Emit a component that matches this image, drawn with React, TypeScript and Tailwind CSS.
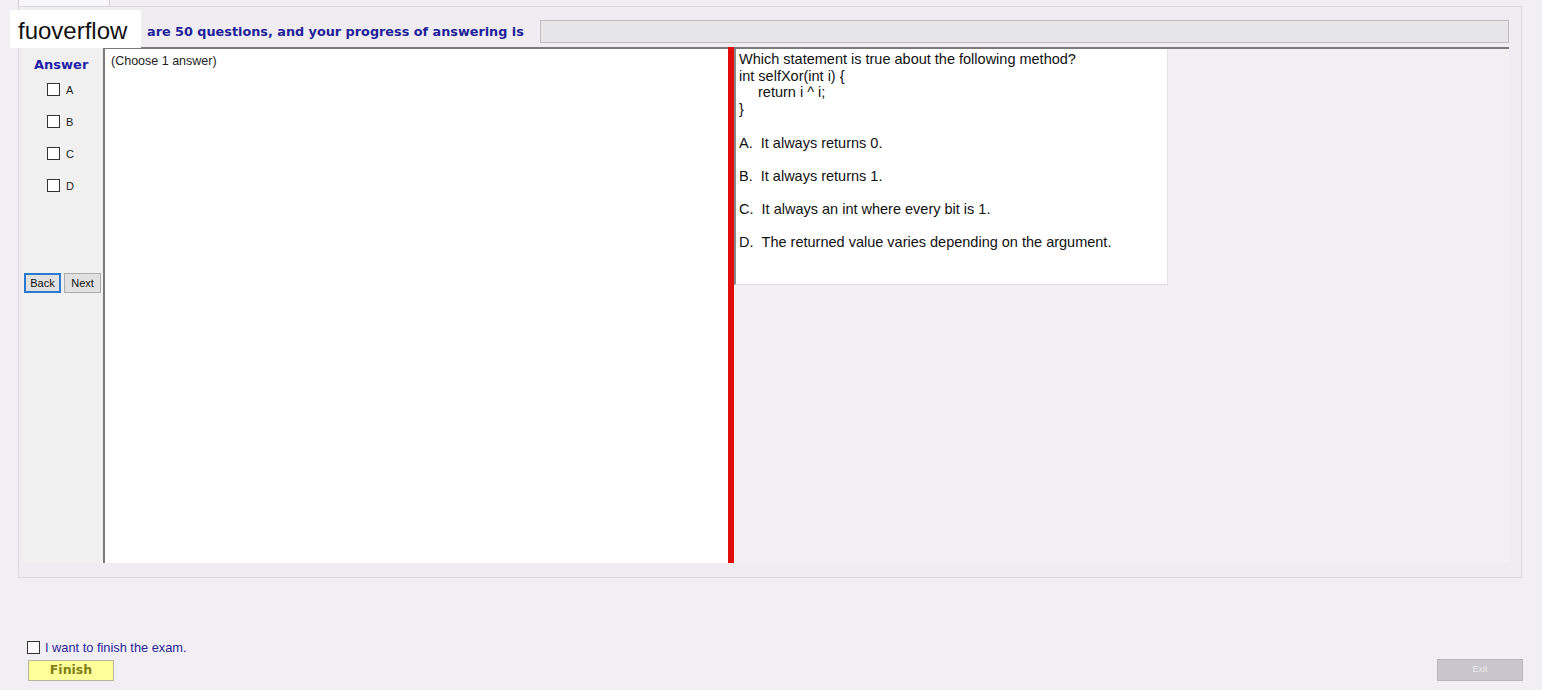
import React from "react";

const opts = [
  { k: "A", t: "It always returns 0." },
  { k: "B", t: "It always returns 1." },
  { k: "C", t: "It always an int where every bit is 1." },
  { k: "D", t: "The returned value varies depending on the argument." },
];

function Box({ className = "" }: { className?: string }) {
  return <span className={"inline-block h-[13px] w-[13px] border border-[#333] bg-white " + className} />;
}

export default function App() {
  return (
    <div className="relative h-[690px] w-[1542px] overflow-hidden bg-[#f1eff3] font-['Liberation_Sans',Arial,sans-serif]">
      {/* tab strip */}
      <div className="flex h-[6px]">
        <div className="ml-[18px] w-[92px] border-x border-[#d4d2d6] bg-[#f7f6f8]" />
      </div>

      {/* main panel */}
      <div className="ml-[18px] w-[1504px] h-[572px] border border-[#d9d7db] bg-[#efedf1] pl-[3px] pr-[12px]">
        {/* header */}
        <div className="flex h-[40px] items-center">
          <span className="ml-[125px] whitespace-nowrap font-['DejaVu_Sans',Verdana,sans-serif] text-[12.8px] font-bold text-[#1f1f99] mt-[10px]">
            are 50 questions, and your progress of answering is
          </span>
          <div className="ml-auto mt-[8px] h-[23px] w-[969px] border border-[#bdbdbd] bg-[#e6e6e8]" />
        </div>

        {/* content */}
        <div className="flex h-[516px]">
          {/* answer column */}
          <div className="flex w-[81px] flex-col bg-[#f0f0f0]">
            <div className="mt-[8px] ml-[12px] font-['DejaVu_Sans',Verdana,sans-serif] text-[13px] font-bold text-[#1f1fa8]">
              Answer
            </div>
            <div className="ml-[25px] mt-[7px] flex flex-col gap-[15.5px]">
              {opts.map((o) => (
                <label key={o.k} className="flex items-center gap-[6px] text-[11px] text-[#222]">
                  <Box />
                  {o.k}
                </label>
              ))}
            </div>
            <div className="ml-[2px] mt-[79px] flex gap-[3px]">
              <button className="h-[20px] w-[37px] border-2 border-[#2a7ad0] bg-[#e1e1e1] text-[11px] text-[#111]">Back</button>
              <button className="h-[20px] w-[37px] border border-[#adadad] bg-[#e1e1e1] text-[11px] text-[#111]">Next</button>
            </div>
          </div>

          {/* choose panel */}
          <div className="w-[625px] border-l-2 border-t-2 border-[#7a7a7a] bg-white pl-[6px] pt-[3px] text-[12.5px] text-[#222]">
            (Choose 1 answer)
          </div>

          {/* divider */}
          <div className="w-[6px] bg-[#e00b0b]" />

          {/* question panel */}
          <div className="flex-1 border-t-2 border-[#7a7a7a] bg-[#f3f0f4]">
            <div className="h-[236px] w-[434px] border-l-2 border-[#8a8a8a] border-r border-b border-r-[#e4e2e6] border-b-[#dedce0] bg-white pl-[3px] pt-[2px] text-[14.5px] leading-[16.5px] text-[#111]">
              <div>Which statement is true about the following method?</div>
              <div>int selfXor(int i) {"{"}</div>
              <div className="pl-[19px]">return i ^ i;</div>
              <div>{"}"}</div>
              <div className="mt-[18px] flex flex-col gap-[16.5px]">
                {opts.map((o) => (
                  <div key={o.k}>
                    {o.k}.&nbsp;&nbsp;{o.t}
                  </div>
                ))}
              </div>
            </div>
          </div>
        </div>
      </div>

      {/* bottom */}
      <div className="ml-[27px] mt-[60px] flex items-center gap-[5px]">
        <Box className="border-[#222]" />
        <span className="text-[12.8px] text-[#2a1f9a]">I want to finish the exam.</span>
      </div>
      <div className="flex items-end pr-[19px]">
        <button className="ml-[28px] mt-[3px] h-[21px] w-[86px] border border-[#b5b5a0] bg-[#ffff99] font-['DejaVu_Sans',Verdana,sans-serif] text-[12.5px] font-bold text-[#7f7f1a]">
          Finish
        </button>
        <button className="ml-auto h-[22px] w-[86px] border border-[#b9b5bd] bg-[#c9c5cd] text-[9px] text-[#ececec]">
          Exit
        </button>
      </div>

      {/* logo overlay */}
      <div className="absolute left-[10px] top-[10px] flex h-[38px] w-[131px] items-center bg-white pl-[8px] pt-[4px] text-[24px] text-[#111]">
        fuoverflow
      </div>
    </div>
  );
}
